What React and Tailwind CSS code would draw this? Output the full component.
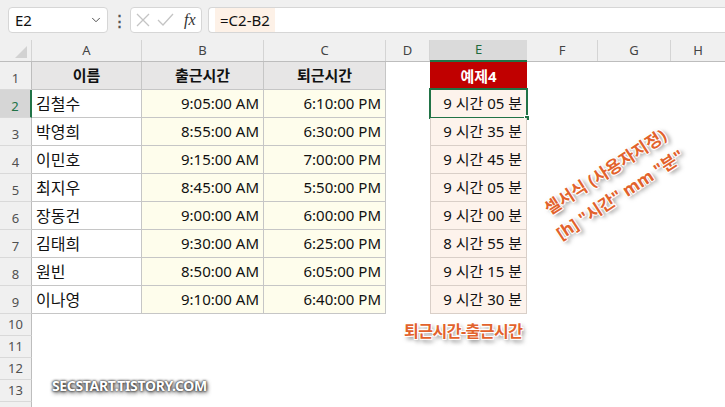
import { ChevronDown } from 'lucide-react';

const font = { fontFamily: '"Noto Sans", "Noto Sans CJK KR", sans-serif' };

const rows = [
  ['김철수', '9:05:00 AM', '6:10:00 PM', '9 시간 05 분'],
  ['박영희', '8:55:00 AM', '6:30:00 PM', '9 시간 35 분'],
  ['이민호', '9:15:00 AM', '7:00:00 PM', '9 시간 45 분'],
  ['최지우', '8:45:00 AM', '5:50:00 PM', '9 시간 05 분'],
  ['장동건', '9:00:00 AM', '6:00:00 PM', '9 시간 00 분'],
  ['김태희', '9:30:00 AM', '6:25:00 PM', '8 시간 55 분'],
  ['원빈', '8:50:00 AM', '6:05:00 PM', '9 시간 15 분'],
  ['이나영', '9:10:00 AM', '6:40:00 PM', '9 시간 30 분'],
];

const RowHead = ({ n, active, tall }) => (
  <div
    className={`w-[32px] shrink-0 flex justify-center border-b border-[#d9d9d9] text-[13px] ${
      tall ? 'items-end pb-[1px]' : 'items-center'
    } ${
      active
        ? 'bg-[#d6d6d6] text-[#217346] border-r-2 border-r-[#217346]'
        : 'bg-[#f0f0f0] text-[#505050] border-r border-r-[#bdbdbd]'
    }`}
  >
    {n}
  </div>
);

const outline =
  '-1px -1px 0 #fff, 1px -1px 0 #fff, -1px 1px 0 #fff, 1px 1px 0 #fff, 2px 3px 4px rgba(0,0,0,0.55)';

export default function App() {
  return (
    <div className="relative w-[725px] h-[407px] overflow-hidden bg-white text-[#111]" style={font}>
      {/* Formula bar */}
      <div className="h-[40px] bg-[#f0f0f0] flex items-start pt-[7px] pl-[8px]">
        <div className="w-[100px] h-[26px] bg-white border border-[#d6d6d6] rounded-[4px] flex items-center justify-between pl-[6px] pr-[4px] text-[15px]">
          <span>E2</span>
          <ChevronDown size={14} strokeWidth={1.6} className="text-[#444]" />
        </div>
        <div className="w-[22px] h-[26px] flex items-center justify-center text-[#555] text-[15px] font-bold">⋮</div>
        <div className="w-[72px] h-[26px] bg-white border border-[#d6d6d6] rounded-[4px] flex items-center pl-[5px] gap-[7px]">
          <svg width="14" height="14" viewBox="0 0 14 14" stroke="#c4c4c4" strokeWidth="1.3" fill="none">
            <path d="M1 1 L13 13 M13 1 L1 13" />
          </svg>
          <svg width="17" height="14" viewBox="0 0 17 14" stroke="#c4c4c4" strokeWidth="1.3" fill="none">
            <path d="M1 7 L6 12 L16 1" />
          </svg>
          <span className="italic text-[16px] text-[#333] ml-[3px]" style={{ fontFamily: '"Liberation Serif", serif' }}>
            fx
          </span>
        </div>
        <div className="ml-[6px] flex-1 h-[26px] bg-white border border-r-0 border-[#d6d6d6] rounded-l-[4px] flex items-stretch pl-[6px]">
          <div className="bg-[#fdf1e7] px-[5px] flex items-center text-[15px]">=C2-B2</div>
        </div>
      </div>

      {/* Column headers */}
      <div className="flex h-[22px] bg-[#f0f0f0] border-b border-[#bdbdbd] text-[13px] text-[#444]">
        <div className="w-[32px] shrink-0 relative border-r border-[#d4d4d4]">
          <div className="absolute right-[4px] bottom-[3px] w-0 h-0 border-l-[12px] border-l-transparent border-b-[12px] border-b-[#d2d2d2]" />
        </div>
        <div className="w-[110px] shrink-0 flex items-center justify-center border-r border-[#d4d4d4]">A</div>
        <div className="w-[122px] shrink-0 flex items-center justify-center border-r border-[#d4d4d4]">B</div>
        <div className="w-[122px] shrink-0 flex items-center justify-center border-r border-[#d4d4d4]">C</div>
        <div className="w-[44px] shrink-0 flex items-center justify-center border-r border-[#d4d4d4]">D</div>
        <div className="w-[97px] shrink-0 flex items-center justify-center bg-[#dadada] text-[#1e6b3e] border-b-2 border-[#217346] -mb-px">E</div>
        <div className="w-[71px] shrink-0 flex items-center justify-center border-r border-[#d4d4d4]">F</div>
        <div className="w-[73px] shrink-0 flex items-center justify-center border-r border-[#d4d4d4]">G</div>
        <div className="flex-1 flex items-center justify-center">H</div>
      </div>

      {/* Row 1 */}
      <div className="flex h-[28px] text-[15px]">
        <RowHead n={1} tall />
        <div className="w-[110px] shrink-0 bg-[#e7e6e6] border-r border-b border-[#c6c6c6] flex items-center justify-center font-bold">이름</div>
        <div className="w-[122px] shrink-0 bg-[#e7e6e6] border-r border-b border-[#c6c6c6] flex items-center justify-center font-bold">출근시간</div>
        <div className="w-[122px] shrink-0 bg-[#e7e6e6] border-r border-b border-[#c6c6c6] flex items-center justify-center font-bold">퇴근시간</div>
        <div className="w-[44px] shrink-0" />
        <div className="w-[97px] shrink-0 bg-[#c00000] text-white flex items-center justify-center font-bold">예제4</div>
      </div>

      {/* Data rows */}
      {rows.map((r, i) => (
        <div key={i} className="flex h-[28px] text-[15px]">
          <RowHead n={i + 2} active={i === 0} tall />
          <div className="w-[110px] shrink-0 bg-white border-r border-b border-[#c6c6c6] flex items-center pl-[4px] text-[16px]">{r[0]}</div>
          <div className="w-[122px] shrink-0 bg-[#fefdec] border-r border-b border-[#c6c6c6] flex items-center justify-end pr-[4px]">{r[1]}</div>
          <div className="w-[122px] shrink-0 bg-[#fefdec] border-r border-b border-[#c6c6c6] flex items-center justify-end pr-[4px]">{r[2]}</div>
          <div className="w-[44px] shrink-0" />
          <div className="relative w-[97px] shrink-0 bg-[#fdf3ec] border-x border-b border-[#d9cfc8] flex items-center justify-end pr-[4px]">
            {r[3]}
            {i === 0 && (
              <>
                <div className="absolute -left-[2px] -top-[2px] -right-[2px] -bottom-[2px] border-2 border-[#217346]" />
                <div className="absolute -right-[4px] -bottom-[4px] w-[6px] h-[6px] bg-[#217346] border border-white" />
              </>
            )}
          </div>
        </div>
      ))}

      {/* Empty rows */}
      {[10, 11, 12, 13].map((n) => (
        <div key={n} className="flex h-[22px]">
          <RowHead n={n} />
        </div>
      ))}
      <div className="flex h-[22px]">
        <div className="w-[32px] shrink-0 bg-[#f0f0f0] border-r border-[#bdbdbd]" />
      </div>

      {/* Annotations */}
      <div
        className="absolute left-[505px] top-[156px] w-[215px] text-center text-[17px] font-bold leading-[27px] text-[#e2622c] -rotate-[33deg]"
        style={{ textShadow: outline }}
      >
        <div>셀서식 (사용자지정)</div>
        <div>[h] "시간" mm "분"</div>
      </div>
      <div
        className="absolute left-[404px] top-[319px] text-[16px] font-bold text-[#e2622c] tracking-[-0.5px]"
        style={{ textShadow: outline }}
      >
        퇴근시간-출근시간
      </div>
      <div
        className="absolute left-[52px] top-[375px] text-[14px] font-bold text-white tracking-tight"
        style={{ textShadow: '0 0 2px #333, 0 0 3px #333, 1px 2px 4px rgba(0,0,0,0.7)' }}
      >
        SECSTART.TISTORY.COM
      </div>
    </div>
  );
}
